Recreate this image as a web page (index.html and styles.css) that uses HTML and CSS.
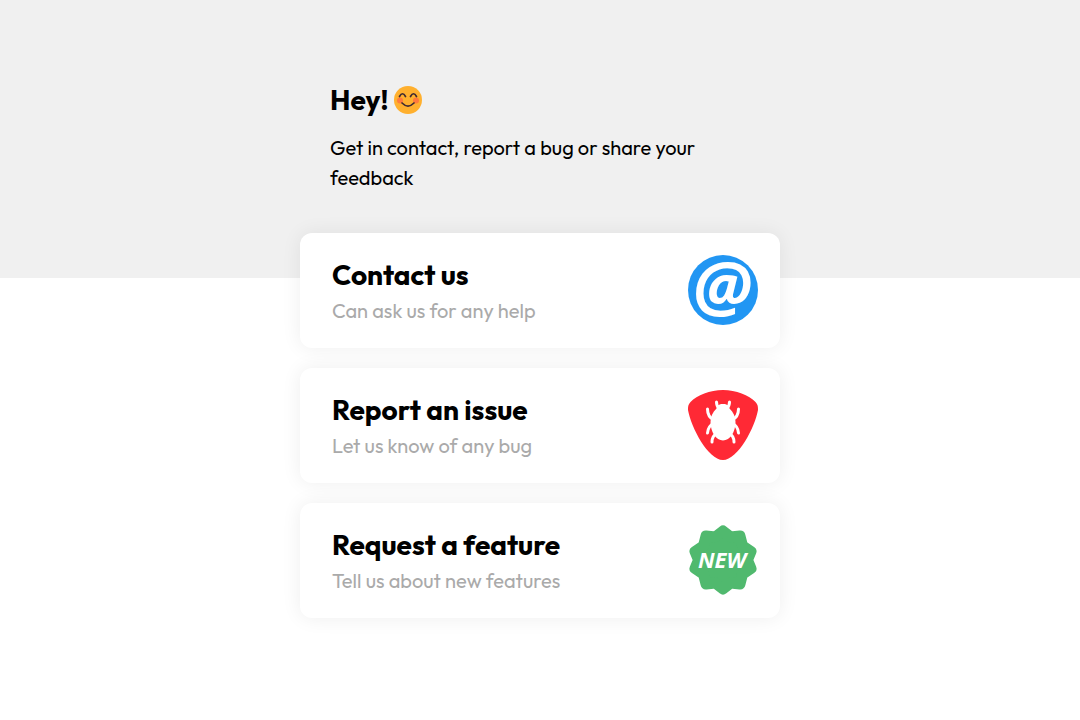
FILE: index.html
```html
<!DOCTYPE html>
<html lang="en">
<head>
    <meta charset="UTF-8">
    <meta name="viewport" content="width=device-width, initial-scale=1.0">
    <title>Feedback</title>
    <link rel="stylesheet" href="styles.css">
</head>
<body>

    <header class="header">
        <div class="intro">
            <h1>Hey!
                <svg class="emoji" viewBox="0 0 28 28" aria-hidden="true">
                    <circle cx="14" cy="14" r="14" fill="#ffb02e"/>
                    <circle cx="6" cy="14.5" r="3" fill="#ff7a3d"/>
                    <circle cx="22" cy="14.5" r="3" fill="#ff7a3d"/>
                    <path d="M5.500 10.500Q8.500 5 11.500 10.500M16.500 10.500Q19.500 5 22.500 10.500M8 17Q14 23 20 17" fill="none" stroke="#402a32" stroke-width="1.700" stroke-linecap="round"/>
                </svg>
            </h1>
            <p>Get in contact, report a bug or share your feedback</p>
        </div>
    </header>

    <main class="cards">
        <a class="card" href="#contact">
            <div class="text">
                <h2>Contact us</h2>
                <p>Can ask us for any help</p>
            </div>
            <svg class="icon" viewBox="0 0 70 70" aria-hidden="true">
                <circle cx="35" cy="35" r="35" fill="#2196f3"/>
                <text class="at" x="34" y="56" text-anchor="middle">@</text>
            </svg>
        </a>
        <a class="card" href="#issue">
            <div class="text">
                <h2>Report an issue</h2>
                <p>Let us know of any bug</p>
            </div>
            <svg class="icon" viewBox="0 0 70 70" aria-hidden="true">
                <path d="M35 0C22 0 9 5 2.500 12C0 14.500 0 17 0 20C3 37 20 70 35 70C50 70 67 37 70 20C70 17 70 14.500 67.500 12C61 5 48 0 35 0Z" fill="#ff2935"/>
                <path d="M35 14C39 14 41.500 16 41.500 18.500C45.500 22 47.500 27 47.500 32C47.500 42 42 50.500 35 50.500C28 50.500 22.500 42 22.500 32C22.500 27 24.500 22 28.500 18.500C28.500 16 31 14 35 14Z" fill="#fff"/>
                <path d="M28.500 12Q28.500 16 31 18M41.500 12Q41.500 16 39 18M19.500 19Q19.500 27 26 30M50.500 19Q50.500 27 44 30M19.500 43Q20 36 26 33M50.500 43Q50 36 44 33M24 52Q24 46 29 43M46 52Q46 46 41 43" fill="none" stroke="#fff" stroke-width="3" stroke-linecap="round"/>
            </svg>
        </a>
        <a class="card" href="#feature">
            <div class="text">
                <h2>Request a feature</h2>
                <p>Tell us about new features</p>
            </div>
            <svg class="icon" viewBox="0 0 70 70" aria-hidden="true">
                <path d="M35 6L42.700 12L52 11L54.500 20.800L63 26.500L59.500 35L63 43.500L54.500 49.200L52 59L42.700 58L35 64L27.300 58L18 59L15.500 49.200L7 43.500L10.500 35L7 26.500L15.500 20.800L18 11L27.300 12Z" fill="#50b96e" stroke="#50b96e" stroke-width="11" stroke-linejoin="round"/>
                <text class="new" x="34" y="43" text-anchor="middle">NEW</text>
            </svg>
        </a>
    </main>

</body>
</html>
```
FILE: styles.css
```css
* {
    box-sizing: border-box;
}
body {
    margin: 0;
    background: #fff;
    color: #000;
    font-family: Outfit, Lato, sans-serif;
}
h1, h2, p {
    margin: 0;
}
.header {
    background: #f0f0f0;
    padding: 80px 20px 85px;
}
.intro {
    max-width: 480px;
    margin: auto;
    padding: 0 30px;
}
.intro h1 {
    display: flex;
    align-items: center;
    gap: 5px;
    font-size: 28px;
    line-height: 40px;
}
.emoji {
    width: 28px;
    height: 28px;
}
.intro p {
    margin-top: 13px;
    font-size: 20px;
    line-height: 30px;
}
.cards {
    display: flex;
    flex-direction: column;
    gap: 20px;
    max-width: 480px;
    margin: -45px auto 0;    /* first card overlaps the header */
    padding-bottom: 40px;
}
.card {
    display: flex;
    align-items: flex-start;
    justify-content: space-between;
    padding: 22px 22px 18px 32px;
    min-height: 115px;
    border-radius: 12px;
    background: #fff;
    box-shadow: 0 0 20px rgba(0, 0, 0, 0.07);
    color: inherit;
    text-decoration: none;
}
.card h2 {
    margin-top: 2px;
    font-size: 28px;
    line-height: 36px;
}
.card p {
    color: #aaa;
    font-size: 20px;
    line-height: 36px;
}
.icon {
    width: 70px;
    height: 70px;
    overflow: visible;
}
.icon text {
    fill: #fff;
    font-family: "Open Sans", sans-serif;
    font-style: italic;
    font-weight: bold;
}
.at {
    font-size: 68px;
}
.new {
    font-size: 22px;
}
```
